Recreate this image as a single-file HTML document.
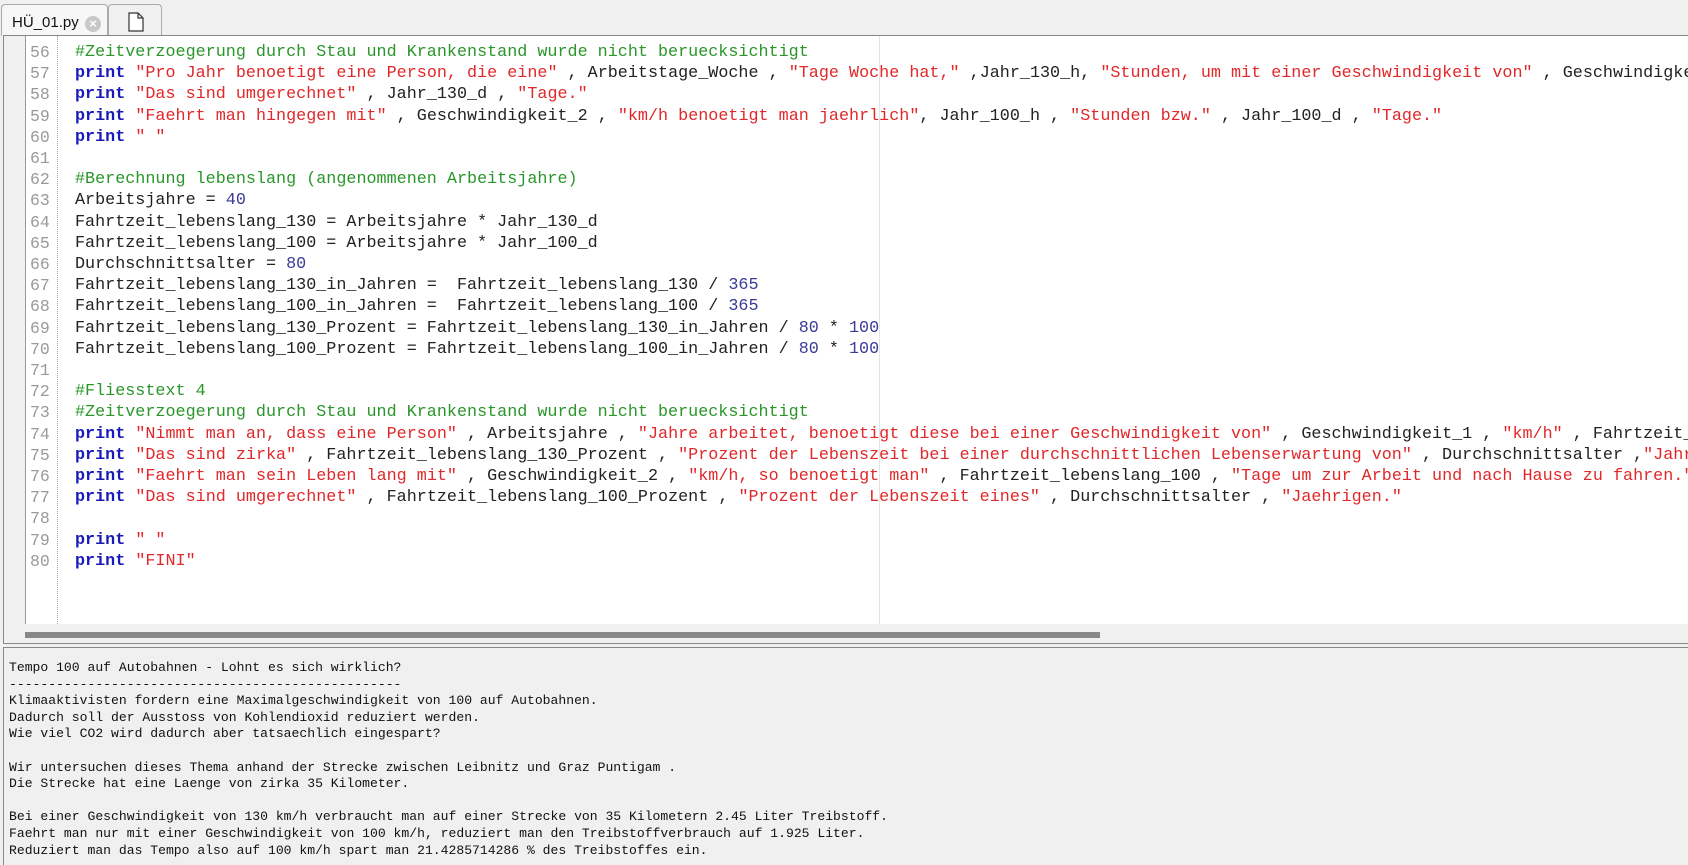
<!DOCTYPE html>
<html><head><meta charset="utf-8"><style>
*{margin:0;padding:0;box-sizing:border-box}
body{width:1688px;height:865px;overflow:hidden;background:#f0f0f0;position:relative;font-family:"Liberation Mono",monospace}
.tab1{position:absolute;left:1px;top:4px;width:107px;height:32px;background:#f7f7f7;border:1px solid #aaa;border-bottom:none;border-radius:4px 4px 0 0;font-family:"Liberation Sans",sans-serif;font-size:15px;color:#111;padding:9px 0 0 10px}
.x{position:absolute;left:83px;top:11px;width:16px;height:16px;border-radius:50%;background:#c8c8c8;color:#fff;font-size:13px;line-height:16px;text-align:center;font-weight:bold}
.tab2{position:absolute;left:108px;top:4px;width:54px;height:31px;background:#f0f0f0;border:1px solid #aaa;border-bottom:none;border-radius:4px 4px 0 0}
.tabline{position:absolute;left:108px;right:0;top:35px;height:1px;background:#999}
.ed{position:absolute;left:3px;top:35px;width:1685px;height:609px;background:#fff;border:1px solid #888;border-right:none;overflow:hidden}
.gut{position:absolute;left:0;top:0;width:22px;height:588px;background:#f0f0f0;border-right:1px solid #999}
.dots{position:absolute;left:53px;top:0;height:588px;border-left:1px dotted #aaa}
.marker{position:absolute;left:875px;top:0;height:588px;width:1px;background:#e4e4e4}
.nums{position:absolute;left:23px;top:6px;width:30px;font-size:16.5px;line-height:21.2px;color:#999;padding-left:3px;white-space:pre}
.code{position:absolute;left:71px;top:6px;font-size:16.75px;line-height:21.2px;color:#222;white-space:pre}
.k{color:#1a1ab8;font-weight:bold}.s{color:#e0282a}.c{color:#2a962a}.n{color:#3a3a98}
.hs{position:absolute;left:0;top:588px;width:1685px;height:20px;background:#f0f0f0}
.thumb{position:absolute;left:21px;top:8px;width:1075px;height:6px;background:#888}
.con{position:absolute;left:3px;top:647px;width:1685px;height:218px;border:1px solid #888;border-right:none;border-bottom:none;background:#f0f0f0;font-size:13.08px;line-height:16.6px;color:#111;white-space:pre;padding:12px 0 0 5px}
</style></head><body>
<div class="tab1">HÜ_01.py<div class="x">×</div></div>
<div class="tab2"><svg width="54" height="31" viewBox="0 0 54 31"><path d="M20 8h9l5 5v13H20z" fill="#fff" stroke="#333" stroke-width="1.2"/><path d="M29 8v5h5" fill="none" stroke="#333" stroke-width="1.2"/></svg></div>
<div class="tabline"></div>
<div class="ed">
<div class="gut"></div><div class="dots"></div><div class="marker"></div>
<div class="nums">56
57
58
59
60
61
62
63
64
65
66
67
68
69
70
71
72
73
74
75
76
77
78
79
80</div>
<div class="code"><span class="c">#Zeitverzoegerung durch Stau und Krankenstand wurde nicht beruecksichtigt</span>
<span class="k">print</span> <span class="s">"Pro Jahr benoetigt eine Person, die eine"</span> , Arbeitstage_Woche , <span class="s">"Tage Woche hat,"</span> ,Jahr_130_h, <span class="s">"Stunden, um mit einer Geschwindigkeit von"</span> , Geschwindigkeit_1 , <span class="s">"km/h"</span>
<span class="k">print</span> <span class="s">"Das sind umgerechnet"</span> , Jahr_130_d , <span class="s">"Tage."</span>
<span class="k">print</span> <span class="s">"Faehrt man hingegen mit"</span> , Geschwindigkeit_2 , <span class="s">"km/h benoetigt man jaehrlich"</span>, Jahr_100_h , <span class="s">"Stunden bzw."</span> , Jahr_100_d , <span class="s">"Tage."</span>
<span class="k">print</span> <span class="s">" "</span>

<span class="c">#Berechnung lebenslang (angenommenen Arbeitsjahre)</span>
Arbeitsjahre = <span class="n">40</span>
Fahrtzeit_lebenslang_130 = Arbeitsjahre * Jahr_130_d
Fahrtzeit_lebenslang_100 = Arbeitsjahre * Jahr_100_d
Durchschnittsalter = <span class="n">80</span>
Fahrtzeit_lebenslang_130_in_Jahren =  Fahrtzeit_lebenslang_130 / <span class="n">365</span>
Fahrtzeit_lebenslang_100_in_Jahren =  Fahrtzeit_lebenslang_100 / <span class="n">365</span>
Fahrtzeit_lebenslang_130_Prozent = Fahrtzeit_lebenslang_130_in_Jahren / <span class="n">80</span> * <span class="n">100</span>
Fahrtzeit_lebenslang_100_Prozent = Fahrtzeit_lebenslang_100_in_Jahren / <span class="n">80</span> * <span class="n">100</span>

<span class="c">#Fliesstext 4</span>
<span class="c">#Zeitverzoegerung durch Stau und Krankenstand wurde nicht beruecksichtigt</span>
<span class="k">print</span> <span class="s">"Nimmt man an, dass eine Person"</span> , Arbeitsjahre , <span class="s">"Jahre arbeitet, benoetigt diese bei einer Geschwindigkeit von"</span> , Geschwindigkeit_1 , <span class="s">"km/h"</span> , Fahrtzeit_lebenslang_130
<span class="k">print</span> <span class="s">"Das sind zirka"</span> , Fahrtzeit_lebenslang_130_Prozent , <span class="s">"Prozent der Lebenszeit bei einer durchschnittlichen Lebenserwartung von"</span> , Durchschnittsalter ,<span class="s">"Jahren."</span>
<span class="k">print</span> <span class="s">"Faehrt man sein Leben lang mit"</span> , Geschwindigkeit_2 , <span class="s">"km/h, so benoetigt man"</span> , Fahrtzeit_lebenslang_100 , <span class="s">"Tage um zur Arbeit und nach Hause zu fahren."</span>
<span class="k">print</span> <span class="s">"Das sind umgerechnet"</span> , Fahrtzeit_lebenslang_100_Prozent , <span class="s">"Prozent der Lebenszeit eines"</span> , Durchschnittsalter , <span class="s">"Jaehrigen."</span>

<span class="k">print</span> <span class="s">" "</span>
<span class="k">print</span> <span class="s">"FINI"</span></div>
<div class="hs"><div class="thumb"></div></div>
</div>
<div class="con">Tempo 100 auf Autobahnen - Lohnt es sich wirklich?
--------------------------------------------------
Klimaaktivisten fordern eine Maximalgeschwindigkeit von 100 auf Autobahnen.
Dadurch soll der Ausstoss von Kohlendioxid reduziert werden.
Wie viel CO2 wird dadurch aber tatsaechlich eingespart?

Wir untersuchen dieses Thema anhand der Strecke zwischen Leibnitz und Graz Puntigam .
Die Strecke hat eine Laenge von zirka 35 Kilometer.

Bei einer Geschwindigkeit von 130 km/h verbraucht man auf einer Strecke von 35 Kilometern 2.45 Liter Treibstoff.
Faehrt man nur mit einer Geschwindigkeit von 100 km/h, reduziert man den Treibstoffverbrauch auf 1.925 Liter.
Reduziert man das Tempo also auf 100 km/h spart man 21.4285714286 % des Treibstoffes ein.</div>
</body></html>
